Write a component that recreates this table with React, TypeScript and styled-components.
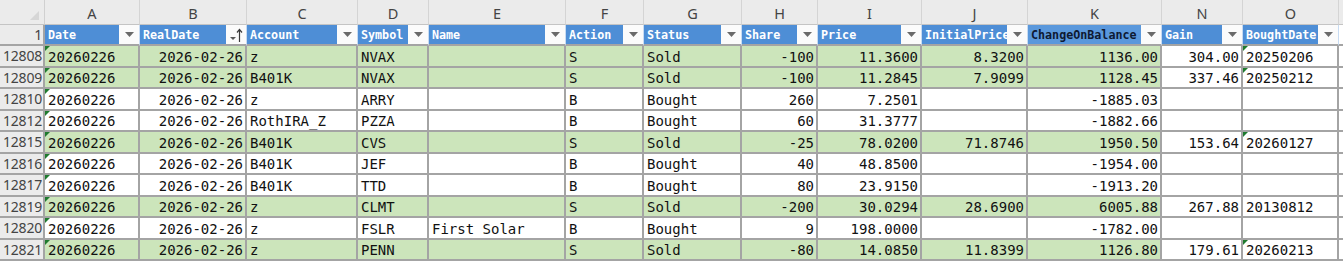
import React from "react";
import styled, { createGlobalStyle, css } from "styled-components";

type TRow = {
  n: number;
  date: string;
  real: string;
  acct: string;
  sym: string;
  name: string;
  act: string;
  status: string;
  share: string;
  price: string;
  init: string;
  chg: string;
  gain: string;
  bought: string;
  boughtFlag?: boolean;
};

const rows: TRow[] = [
  { n: 12808, date: "20260226", real: "2026-02-26", acct: "z", sym: "NVAX", name: "", act: "S", status: "Sold", share: "-100", price: "11.3600", init: "8.3200", chg: "1136.00", gain: "304.00", bought: "20250206", boughtFlag: true },
  { n: 12809, date: "20260226", real: "2026-02-26", acct: "B401K", sym: "NVAX", name: "", act: "S", status: "Sold", share: "-100", price: "11.2845", init: "7.9099", chg: "1128.45", gain: "337.46", bought: "20250212", boughtFlag: true },
  { n: 12810, date: "20260226", real: "2026-02-26", acct: "z", sym: "ARRY", name: "", act: "B", status: "Bought", share: "260", price: "7.2501", init: "", chg: "-1885.03", gain: "", bought: "" },
  { n: 12812, date: "20260226", real: "2026-02-26", acct: "RothIRA_Z", sym: "PZZA", name: "", act: "B", status: "Bought", share: "60", price: "31.3777", init: "", chg: "-1882.66", gain: "", bought: "" },
  { n: 12815, date: "20260226", real: "2026-02-26", acct: "B401K", sym: "CVS", name: "", act: "S", status: "Sold", share: "-25", price: "78.0200", init: "71.8746", chg: "1950.50", gain: "153.64", bought: "20260127", boughtFlag: true },
  { n: 12816, date: "20260226", real: "2026-02-26", acct: "B401K", sym: "JEF", name: "", act: "B", status: "Bought", share: "40", price: "48.8500", init: "", chg: "-1954.00", gain: "", bought: "" },
  { n: 12817, date: "20260226", real: "2026-02-26", acct: "B401K", sym: "TTD", name: "", act: "B", status: "Bought", share: "80", price: "23.9150", init: "", chg: "-1913.20", gain: "", bought: "" },
  { n: 12819, date: "20260226", real: "2026-02-26", acct: "z", sym: "CLMT", name: "", act: "S", status: "Sold", share: "-200", price: "30.0294", init: "28.6900", chg: "6005.88", gain: "267.88", bought: "20130812" },
  { n: 12820, date: "20260226", real: "2026-02-26", acct: "z", sym: "FSLR", name: "First Solar", act: "B", status: "Bought", share: "9", price: "198.0000", init: "", chg: "-1782.00", gain: "", bought: "" },
  { n: 12821, date: "20260226", real: "2026-02-26", acct: "z", sym: "PENN", name: "", act: "S", status: "Sold", share: "-80", price: "14.0850", init: "11.8399", chg: "1126.80", gain: "179.61", bought: "20260213", boughtFlag: true },
];

const columns = [
  { letter: "A", title: "Date" },
  { letter: "B", title: "RealDate", sorted: true },
  { letter: "C", title: "Account" },
  { letter: "D", title: "Symbol" },
  { letter: "E", title: "Name" },
  { letter: "F", title: "Action" },
  { letter: "G", title: "Status" },
  { letter: "H", title: "Share" },
  { letter: "I", title: "Price" },
  { letter: "J", title: "InitialPrice" },
  { letter: "K", title: "ChangeOnBalance", active: true },
  { letter: "N", title: "Gain" },
  { letter: "O", title: "BoughtDate" },
];

const GRID = "#a4a4a4";

const GlobalStyle = createGlobalStyle`
  html, body {
    margin: 0;
    padding: 0;
    background: #ffffff;
    overflow: hidden;
  }
`;

const Sheet = styled.div`
  display: grid;
  grid-template-columns: 45px 95px 107px 111px 71px 137px 78px 98px 76px 104px 106px 134px 81px 96px 4px;
  grid-template-rows: 25px 21px repeat(10, 21.5px);
  width: 1343px;
  height: 261px;
  overflow: hidden;
`;

const Corner = styled.div`
  background: #ebebeb;
  border-right: 1px solid #d0d0d0;
  border-bottom: 1px solid #c4c4c4;
  position: relative;

  &::after {
    content: "";
    position: absolute;
    right: 5px;
    bottom: 4px;
    border-left: 9px solid transparent;
    border-bottom: 9px solid #d6d6d6;
  }
`;

const ColLetter = styled.div`
  display: flex;
  align-items: center;
  justify-content: center;
  background: #ebebeb;
  border-right: 1px solid #d4d4d4;
  border-bottom: 1px solid #c4c4c4;
  font-family: "Noto Sans", "Open Sans", sans-serif;
  font-size: 14.5px;
  color: #444444;
  padding-top: 1px;
`;

const RowNum = styled.div`
  display: flex;
  align-items: center;
  justify-content: flex-end;
  background: #ebebeb;
  border-right: 2px solid ${GRID};
  border-bottom: 2px solid ${GRID};
  padding-right: 1px;
  font-family: "Noto Sans", "Open Sans", sans-serif;
  font-size: 14px;
  color: #444444;
  letter-spacing: -0.2px;
`;

const HeaderCell = styled.div<{ $active?: boolean }>`
  position: relative;
  display: flex;
  align-items: center;
  background: #4e8ed6;
  border-right: 1px solid #c7dbf2;
  border-bottom: 2px solid ${GRID};
  padding-left: 3px;
  overflow: hidden;
  white-space: nowrap;
  font-family: "DejaVu Sans Mono", "Liberation Mono", monospace;
  font-size: 11.7px;
  font-weight: bold;
  color: ${(p) => (p.$active ? "#0e1a33" : "#ffffff")};
  ${(p) =>
    p.$active &&
    css`
      background: #5a98dc;
    `}
`;

const FilterButton = styled.div`
  position: absolute;
  top: 0;
  right: 0;
  bottom: 0;
  width: 20px;
  background: #fbfbfb;
  display: flex;
  align-items: center;
  justify-content: center;
`;

const Cell = styled.div<{ $green?: boolean; $right?: boolean; $flag?: boolean }>`
  position: relative;
  display: flex;
  align-items: center;
  justify-content: ${(p) => (p.$right ? "flex-end" : "flex-start")};
  background: ${(p) => (p.$green ? "#cce5bb" : "#ffffff")};
  border-right: 2px solid ${GRID};
  border-bottom: 2px solid ${GRID};
  padding: 2px 2px 0 3px;
  overflow: hidden;
  white-space: nowrap;
  font-family: "DejaVu Sans Mono", "Liberation Mono", monospace;
  font-size: 14px;
  color: #111111;

  ${(p) =>
    p.$flag &&
    css`
      &::before {
        content: "";
        position: absolute;
        left: 0;
        top: 0;
        border-top: 5px solid #1f7a2e;
        border-right: 5px solid transparent;
      }
    `}
`;

const Filler = styled.div<{ $top?: boolean }>`
  background: ${(p) => (p.$top ? "#ebebeb" : "#ffffff")};
  border-bottom: ${(p) => (p.$top ? "1px solid #c4c4c4" : `2px solid ${GRID}`)};
`;

const DropArrow = () => (
  <svg width="9" height="5" viewBox="0 0 9 5">
    <path d="M0 0 H9 L4.5 5 Z" fill="#6a6a6a" />
  </svg>
);

const SortArrow = () => (
  <svg width="14" height="16" viewBox="0 0 14 16">
    <path d="M1 10 H7 L4 13 Z" fill="#5a5a5a" />
    <path d="M10.5 15 V3" stroke="#3a3a3a" strokeWidth="1.2" />
    <path d="M8 5.5 L10.5 2.5 L13 5.5" stroke="#3a3a3a" strokeWidth="1.2" fill="none" />
  </svg>
);

const App = () => {
  return (
    <>
      <GlobalStyle />
      <Sheet>
        <Corner />
        {columns.map((c) => (
          <ColLetter key={c.letter}>{c.letter}</ColLetter>
        ))}
        <Filler $top />

        <RowNum>1</RowNum>
        {columns.map((c) => (
          <HeaderCell key={c.title} $active={c.active}>
            {c.title}
            <FilterButton>{c.sorted ? <SortArrow /> : <DropArrow />}</FilterButton>
          </HeaderCell>
        ))}
        <Filler />

        {rows.map((r) => {
          const g = r.status === "Sold";
          return (
            <React.Fragment key={r.n}>
              <RowNum>{r.n}</RowNum>
              <Cell $green={g} $flag>{r.date}</Cell>
              <Cell $green={g} $right>{r.real}</Cell>
              <Cell $green={g}>{r.acct}</Cell>
              <Cell $green={g}>{r.sym}</Cell>
              <Cell $green={g}>{r.name}</Cell>
              <Cell $green={g}>{r.act}</Cell>
              <Cell $green={g}>{r.status}</Cell>
              <Cell $green={g} $right>{r.share}</Cell>
              <Cell $green={g} $right>{r.price}</Cell>
              <Cell $green={g} $right>{r.init}</Cell>
              <Cell $green={g} $right>{r.chg}</Cell>
              <Cell $right>{r.gain}</Cell>
              <Cell $flag={r.boughtFlag}>{r.bought}</Cell>
              <Filler />
            </React.Fragment>
          );
        })}
      </Sheet>
    </>
  );
};

export default App;
